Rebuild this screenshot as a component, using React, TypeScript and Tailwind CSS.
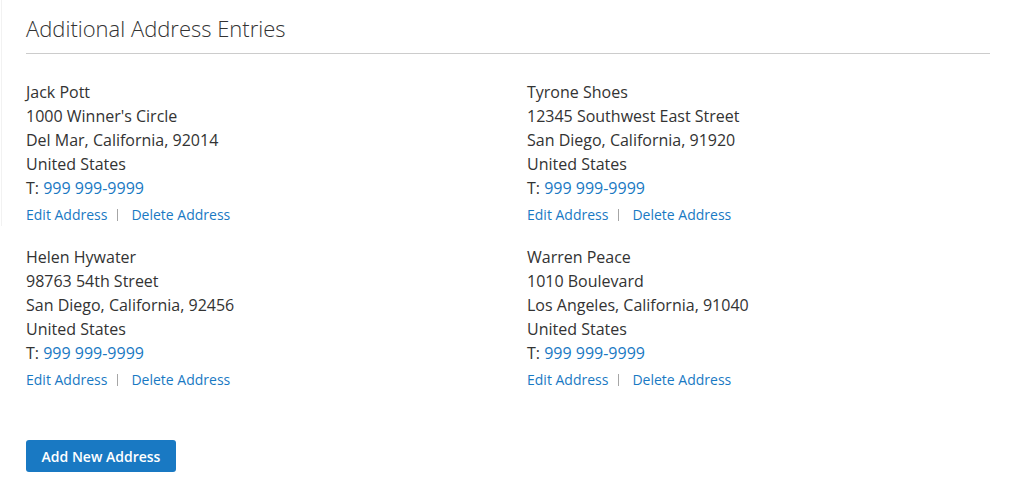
const addresses = [
  { name: "Jack Pott", street: "1000 Winner's Circle", city: "Del Mar, California, 92014" },
  { name: "Tyrone Shoes", street: "12345 Southwest East Street", city: "San Diego, California, 91920" },
  { name: "Helen Hywater", street: "98763 54th Street", city: "San Diego, California, 92456" },
  { name: "Warren Peace", street: "1010 Boulevard", city: "Los Angeles, California, 91040" },
];

function AddressCard({ name, street, city }: { name: string; street: string; city: string }) {
  return (
    <div className="text-[16px] leading-[24px] text-[#333]">
      <div>{name}</div>
      <div>{street}</div>
      <div>{city}</div>
      <div>United States</div>
      <div>
        T: <a className="text-[#1979c3]">999 999-9999</a>
      </div>
      <div className="mt-[5px] flex items-center text-[14px] leading-[20px] text-[#1979c3]">
        <a>Edit Address</a>
        <span className="ml-[10px] mr-[13px] h-[12px] w-px bg-[#a6a6a6]" />
        <a>Delete Address</a>
      </div>
    </div>
  );
}

export default function App() {
  return (
    <div className="flex min-h-[497px] bg-white" style={{ fontFamily: '"Open Sans", sans-serif' }}>
      <div className="ml-px h-[226px] w-px bg-[#f2f2f2]" />
      <div className="ml-[24px] w-[964px]">
        <div className="border-b border-[#ccc] pt-[14px] pb-[11px]">
          <h2 className="text-[22px] font-light leading-[28px] text-[#333]">Additional Address Entries</h2>
        </div>
        <div className="mt-[26px] grid grid-cols-[501px_1fr] gap-y-[20px]">
          {addresses.map((a) => (
            <AddressCard key={a.name} {...a} />
          ))}
        </div>
        <button className="mt-[50px] h-[32px] w-[150px] rounded-[3px] bg-[#1979c3] text-[14px] font-semibold text-white">
          Add New Address
        </button>
      </div>
    </div>
  );
}
